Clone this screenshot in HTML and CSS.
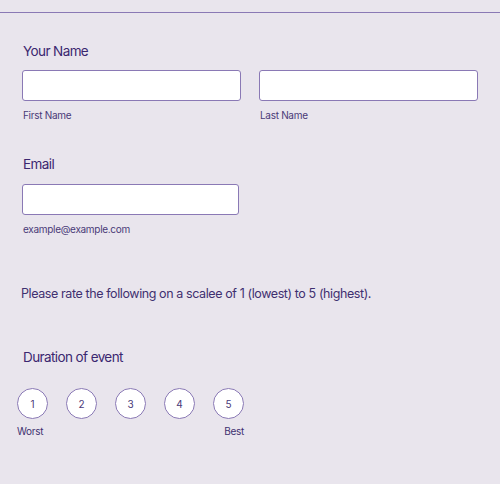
FILE: index.html
```html
<!DOCTYPE html>
<html>
<head>
<meta charset="utf-8">
<link rel="stylesheet" href="styles.css">
</head>
<body>
<div class="page">
  <div class="section name-section">
    <div class="label">Your Name</div>
    <div class="row">
      <div class="field">
        <div class="input"></div>
        <div class="sub">First Name</div>
      </div>
      <div class="field">
        <div class="input"></div>
        <div class="sub">Last Name</div>
      </div>
    </div>
  </div>
  <div class="section email-section">
    <div class="label">Email</div>
    <div class="field email">
      <div class="input"></div>
      <div class="sub">example@example.com</div>
    </div>
  </div>
  <p class="intro">Please rate the following on a scalee of 1 (lowest) to 5 (highest).</p>
  <div class="section rating-section">
    <div class="label">Duration of event</div>
    <div class="rating">
      <div class="circles">
        <div class="circle">1</div>
        <div class="circle">2</div>
        <div class="circle">3</div>
        <div class="circle">4</div>
        <div class="circle">5</div>
      </div>
      <div class="ends"><span>Worst</span><span>Best</span></div>
    </div>
  </div>
</div>
</body>
</html>
```
FILE: styles.css
```css
html, body {
  margin: 0;
  padding: 0;
  background: #e9e5ed;
}
body {
  font-family: Inter, Roboto, "Liberation Sans", sans-serif;
  color: #3c2a6c;
  width: 500px;
  height: 484px;
  overflow: hidden;
}
.page {
  margin-top: 12px;
  border-top: 1px solid #8a79b5;
}
.section {
  padding-left: 22px;
}
.label {
  font-size: 13.5px;
  line-height: 17px;
  padding-left: 1px;
  color: #3b2770;
  letter-spacing: -0.6px;
}
.name-section {
  padding-top: 30px;
}
.name-section .label {
  margin-bottom: 10px;
}
.row {
  display: flex;
  gap: 18px;
}
.field {
  width: 219px;
}
.email {
  width: 217px;
}
.input {
  height: 29px;
  background: #fff;
  border: 1px solid #8a79b5;
  border-radius: 3px;
}
.sub {
  font-size: 10px;
  line-height: 12px;
  margin-top: 8px;
  padding-left: 1px;
  color: #4a3a78;
  letter-spacing: -0.3px;
}
.email-section {
  padding-top: 35px;
}
.email-section .label {
  margin-bottom: 11px;
}
.intro {
  margin: 51px 0 0 21px;
  font-size: 12.5px;
  line-height: 16px;
  color: #3f3070;
  letter-spacing: -0.4px;
}
.rating-section {
  padding-top: 47px;
}
.rating-section .label {
  margin-bottom: 22px;
}
.rating {
  margin-left: -5px;
  width: 227px;
}
.circles {
  display: flex;
  gap: 18px;
}
.circle {
  width: 29px;
  height: 29px;
  border: 1px solid #8a79b5;
  border-radius: 50%;
  background: #fff;
  display: flex;
  align-items: center;
  justify-content: center;
  font-size: 10px;
  color: #4a3a78;
}
.ends {
  display: flex;
  justify-content: space-between;
  font-size: 10px;
  line-height: 12px;
  margin-top: 6px;
  color: #3f3070;
  letter-spacing: -0.3px;
}
```
